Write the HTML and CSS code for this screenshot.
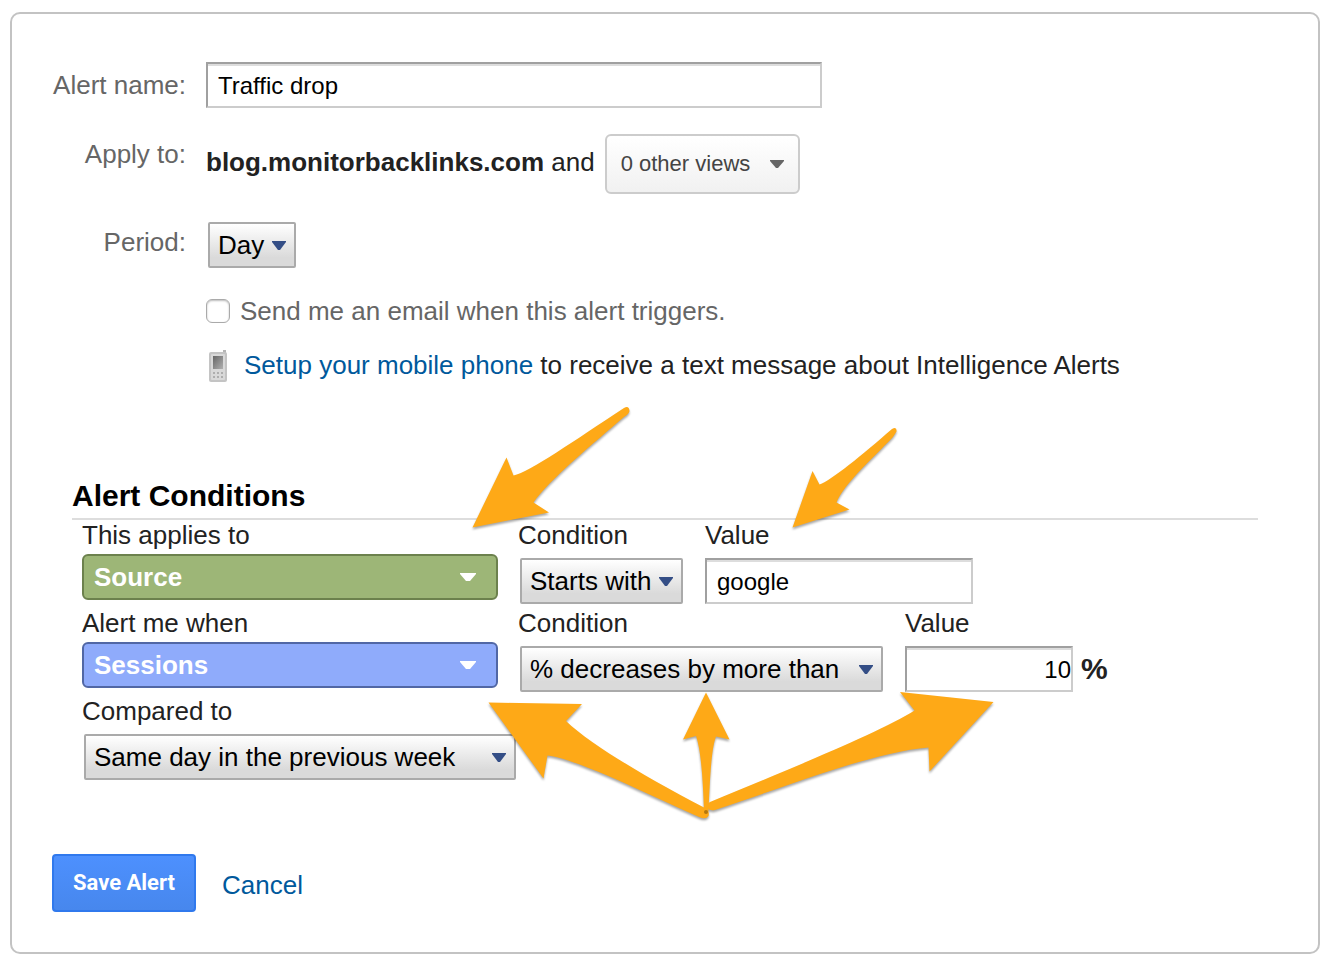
FILE: index.html
```html
<!DOCTYPE html>
<html lang="en">
<head>
    <meta charset="UTF-8">
    <meta name="viewport" content="width=device-width, initial-scale=1.0">
    <title>Custom Alert</title>
    <link rel="stylesheet" href="styles.css">
</head>
<body>
    <form class="alert-card">
        <div class="settings">
            <div class="form-row centered">
                <label class="row-label" for="alertName">Alert name:</label>
                <input type="text" id="alertName" class="text-input name-input" value="Traffic drop">
            </div>

            <div class="form-row views-row">
                <span class="row-label">Apply to:</span>
                <div class="apply-to">
                    <span><strong>blog.monitorbacklinks.com</strong> and</span>
                    <button type="button" class="views-button">
                        0 other views
                        <svg class="caret" width="14" height="8" viewBox="0 0 14 8"><path d="M0 0h14v1L8 8H6L0 1z"/></svg>
                    </button>
                </div>
            </div>

            <div class="form-row period-row">
                <label class="row-label" for="period">Period:</label>
                <select id="period" class="select">
                    <option>Day</option>
                </select>
            </div>

            <div class="notify">
                <div class="email-row">
                    <input type="checkbox" id="sendEmail" class="checkbox">
                    <label for="sendEmail">Send me an email when this alert triggers.</label>
                </div>
                <div class="phone-row">
                    <svg class="phone-icon" width="20" height="32" viewBox="0 0 20 32">
                        <defs>
                            <linearGradient id="screen" x1="0" y1="0" x2="1" y2="1">
                                <stop offset="0" stop-color="#666"/>
                                <stop offset="1" stop-color="#b0b0b0"/>
                            </linearGradient>
                        </defs>
                        <path d="M15 0h3v6h-3z" fill="#b5b5b5"/>
                        <rect x="1" y="2" width="18" height="30" rx="2" fill="#c4c4c4"/>
                        <rect x="3" y="4" width="14" height="26" rx="1" fill="#d9d9d9"/>
                        <rect x="5" y="6" width="10" height="13" fill="url(#screen)"/>
                        <path d="M5 22h2v2H5zM9 22h2v2H9zM13 22h2v2h-2zM5 26h2v2H5zM9 26h2v2H9zM13 26h2v2h-2z" fill="#aeaeae"/>
                    </svg>
                    <span><a href="#">Setup your mobile phone</a> to receive a text message about Intelligence Alerts</span>
                </div>
            </div>
        </div>

        <section class="conditions">
            <h2>Alert Conditions</h2>

            <div class="condition-row">
                <div class="field metric">
                    <label for="dimension">This applies to</label>
                    <button type="button" id="dimension" class="picker green">
                        Source
                        <svg width="16" height="8" viewBox="0 0 16 8"><path d="M0 0h16v1L10 8H6L0 1z"/></svg>
                    </button>
                </div>
                <div class="field">
                    <label for="sourceCondition">Condition</label>
                    <select id="sourceCondition" class="select">
                        <option>Starts with</option>
                    </select>
                </div>
                <div class="field">
                    <label for="sourceValue">Value</label>
                    <input type="text" id="sourceValue" class="text-input source-input" value="google">
                </div>
            </div>

            <div class="condition-row">
                <div class="field metric">
                    <label for="metric">Alert me when</label>
                    <button type="button" id="metric" class="picker blue">
                        Sessions
                        <svg width="16" height="8" viewBox="0 0 16 8"><path d="M0 0h16v1L10 8H6L0 1z"/></svg>
                    </button>
                </div>
                <div class="field">
                    <label for="metricCondition">Condition</label>
                    <select id="metricCondition" class="select select-change">
                        <option>% decreases by more than</option>
                    </select>
                </div>
                <div class="field">
                    <label for="metricValue">Value</label>
                    <div class="percent">
                        <input type="text" id="metricValue" class="text-input percent-input" value="10">
                        <span class="percent-sign">%</span>
                    </div>
                </div>
            </div>

            <div class="condition-row">
                <div class="field">
                    <label for="compared">Compared to</label>
                    <select id="compared" class="select select-compared">
                        <option>Same day in the previous week</option>
                    </select>
                </div>
            </div>

            <!-- arrows pointing at the fields to fill in -->
            <svg class="arrows" width="540" height="430" viewBox="462 400 540 430" aria-hidden="true">
                <path d="M472.5 527.5L506.5 457.5L513.5 475.5C530 472 575 440 624 408Q629 405 629.5 411Q629 414 624 417C595 442 548 481 533.5 502.5L549 512.5Z"/>
                <path d="M792.5 527.5L812.5 471L819.5 484.5C832 480 862 455 892 429Q897 426 896.5 431.5L893 437C872 459 844 484 836.5 502.5L849.5 509.5Z"/>
                <path d="M488.5 702.5L582 704L566 721C590 744 642 775 705 808Q710 811 708.5 816Q706 820 699 817C645 793 577 759 547.5 755.5L543.5 778.5Z"/>
                <path d="M993.5 702L900 692L914.5 710.5C880 732 790 769 710 802Q706 804 708 808Q709 811 715 810C785 787 873 752 928.5 747.5L929.5 771.5Z"/>
                <path d="M706 692.5L729.5 739.5L716 736.5C711 750 710 780 708.5 811Q706 815 704 811C703 780 701 750 696 736L683 739.5Z"/>
                <circle class="pivot" cx="706" cy="812" r="2"/>
            </svg>
        </section>

        <div class="actions">
            <button type="submit" class="save-button">Save Alert</button>
            <a class="cancel" href="#">Cancel</a>
        </div>
    </form>
</body>
</html>
```
FILE: styles.css
```css
:root {
    --text-color: #222;
    --label-color: #666;
    --link-color: #00599c;
    --border-color: #c3c3c3;
    --arrow-color: #fea917;
    --font-family: "Liberation Sans", Arial, sans-serif;
}

* {
    box-sizing: border-box;
}

body {
    margin: 0;
    background: #fff;
    color: var(--text-color);
    font-family: var(--font-family);
    font-size: 26px;
    line-height: 30px;
}

a {
    color: var(--link-color);
    text-decoration: none;
}

button, input, select {
    margin: 0;
    font-family: inherit;
}

.alert-card {
    margin: 12px 22px 24px 10px;
    padding: 48px 40px 40px;
    border: 2px solid var(--border-color);
    border-radius: 10px;
}

.settings {
    display: flex;
    flex-direction: column;
    gap: 26px;
}

.form-row {
    display: grid;
    grid-template-columns: 134px 1fr;
    column-gap: 20px;
    align-items: start;
}

.form-row.centered {
    align-items: center;
}

.row-label {
    padding-top: 5px;
    color: var(--label-color);
    text-align: right;
}

.centered .row-label {
    padding-top: 0;
}

.views-row {
    min-height: 62px;
}

.period-row {
    min-height: 48px;
}

.text-input {
    height: 46px;
    padding: 2px 10px 0;
    border: 2px solid #ccc;
    border-top-color: #a0a0a0;
    border-left-color: #a0a0a0;
    border-radius: 0;
    background: #fff;
    box-shadow: inset 0 2px 0 #ddd;
    color: #000;
    font-size: 24px;
}

.name-input {
    width: 616px;
    max-width: 100%;
}

.apply-to {
    display: flex;
    align-items: baseline;
    gap: 10px;
}

.views-button {
    display: flex;
    align-items: center;
    gap: 20px;
    height: 60px;
    padding: 0 14px;
    border: 2px solid #ccc;
    border-radius: 6px;
    background: linear-gradient(#fff, #f1f1f1);
    color: #444;
    font-size: 22px;
}

.caret {
    fill: #666;
}

.select {
    appearance: none;
    justify-self: start;
    height: 46px;
    margin: 0 2px;
    padding: 0 29px 0 8px;
    border: 2px solid #aaa;
    border-radius: 2px;
    background: url("data:image/svg+xml,%3Csvg xmlns='http://www.w3.org/2000/svg' width='14' height='9'%3E%3Cpath d='M0 0h14v1L8 9H6L0 1z' fill='%23344e86'/%3E%3C/svg%3E") no-repeat right 8px center, linear-gradient(#fff, #dadada 80%);
    color: #000;
    font-size: 26px;
}

.notify {
    display: flex;
    flex-direction: column;
    gap: 24px;
    padding-left: 154px;
}

.email-row {
    display: flex;
    align-items: center;
    gap: 10px;
    color: var(--label-color);
}

.checkbox {
    appearance: none;
    width: 24px;
    height: 24px;
    border: 1px solid #aaa;
    border-radius: 6px;
    background: #fff;
    box-shadow: inset 0 1px 2px #bbb;
}

.phone-row {
    display: flex;
    align-items: flex-start;
    gap: 16px;
    padding-left: 2px;
}

.phone-icon {
    flex: none;
}

.conditions {
    position: relative;
    margin: 96px 20px 0;
}

.conditions h2 {
    margin: 0;
    padding-bottom: 4px;
    border-bottom: 2px solid #ddd;
    color: #000;
    font-size: 30px;
    line-height: 36px;
}

.condition-row {
    display: flex;
    gap: 20px;
    margin-bottom: 4px;
    padding-left: 10px;
}

.field {
    display: flex;
    flex-direction: column;
    align-items: flex-start;
    gap: 8px;
}

.metric {
    width: 416px;
    gap: 4px;
}

.picker {
    display: flex;
    justify-content: space-between;
    align-items: center;
    width: 100%;
    height: 46px;
    padding: 0 20px 0 10px;
    border: 2px solid;
    border-radius: 6px;
    color: #fff;
    font-size: 26px;
    font-weight: bold;
}

.picker svg {
    fill: #fff;
}

.picker.green {
    border-color: #6c814d;
    background: #9db677;
}

.picker.blue {
    border-color: #5167a5;
    background: #8fabfb;
}

.select-change {
    width: 363px;
}

.select-compared {
    width: 432px;
}

.source-input {
    width: 268px;
}

.percent {
    display: flex;
    align-items: center;
    gap: 8px;
}

.percent-input {
    width: 168px;
    padding-right: 0;
    text-align: right;
}

.percent-sign {
    font-size: 30px;
    font-weight: bold;
}

/* lies over the fields and lets clicks through */
.arrows {
    position: absolute;
    top: -78px;
    left: 390px;
    overflow: visible;
    pointer-events: none;
    fill: var(--arrow-color);
    filter: drop-shadow(0 2px 1px rgba(0, 0, 0, 0.35));
}

.pivot {
    fill: #b5770c;
}

.actions {
    display: flex;
    align-items: center;
    gap: 26px;
    margin-top: 74px;
}

.save-button {
    width: 144px;
    height: 58px;
    padding: 0 0 2px;
    border: 2px solid #3079ed;
    border-radius: 4px;
    background: linear-gradient(#4d90fe, #4787ed);
    color: #fff;
    font-family: Roboto, sans-serif;
    font-size: 22px;
    font-weight: bold;
    cursor: pointer;
}

.cancel {
    padding-top: 4px;
}
```
